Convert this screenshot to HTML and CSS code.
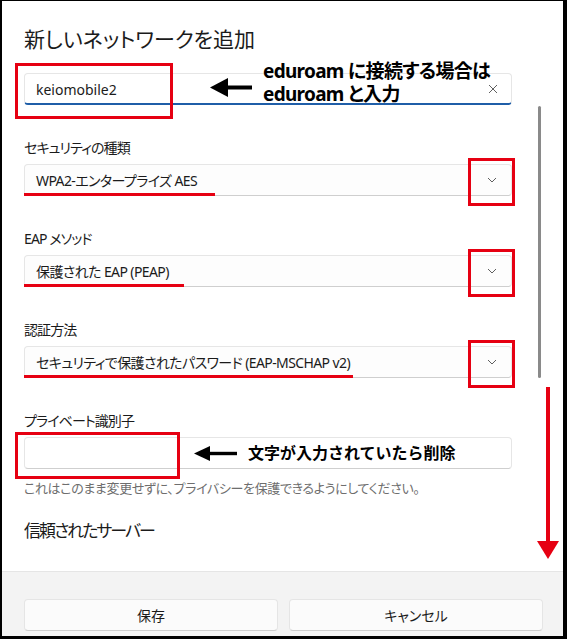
FILE: index.html
```html
<!DOCTYPE html>
<html lang="ja">
<head>
<meta charset="utf-8">
<title>新しいネットワークを追加</title>
<link rel="stylesheet" href="styles.css">
</head>
<body>
<div class="frame">
  <main class="content">
    <h1 class="title">新しいネットワークを追加</h1>

    <div class="field field-ssid">
      <div class="textbox focused">
        <span class="value">keiomobile2</span>
        <svg class="clear" width="10" height="10" viewBox="0 0 10 10"><path d="M1 1L9 9M9 1L1 9" stroke="#606060" stroke-width="1" fill="none"/></svg>
      </div>
      <span class="mark mark-ssid"></span>
      <svg class="arrow arrow-ssid" width="42" height="19" viewBox="0 0 42 19"><polygon points="0,9.5 18,0 18,19" fill="#000"/><rect x="17" y="7.5" width="25" height="4" fill="#000"/></svg>
      <p class="note note-ssid">eduroam に接続する場合は<br>eduroam と入力</p>
    </div>

    <div class="group">
      <div class="label">セキュリティの種類</div>
      <div class="combo">
        <span class="value">WPA2-エンタープライズ AES</span>
        <svg class="chev" width="10" height="6" viewBox="0 0 10 6"><path d="M1 1L5 5L9 1" stroke="#5f5f5f" stroke-width="1" fill="none"/></svg>
        <span class="uline uline-1"></span>
        <span class="mark mark-chev"></span>
      </div>
    </div>

    <div class="group">
      <div class="label">EAP メソッド</div>
      <div class="combo">
        <span class="value">保護された EAP (PEAP)</span>
        <svg class="chev" width="10" height="6" viewBox="0 0 10 6"><path d="M1 1L5 5L9 1" stroke="#5f5f5f" stroke-width="1" fill="none"/></svg>
        <span class="uline uline-2"></span>
        <span class="mark mark-chev"></span>
      </div>
    </div>

    <div class="group">
      <div class="label">認証方法</div>
      <div class="combo">
        <span class="value">セキュリティで保護されたパスワード (EAP-MSCHAP v2)</span>
        <svg class="chev" width="10" height="6" viewBox="0 0 10 6"><path d="M1 1L5 5L9 1" stroke="#5f5f5f" stroke-width="1" fill="none"/></svg>
        <span class="uline uline-3"></span>
        <span class="mark mark-chev"></span>
      </div>
    </div>

    <div class="group">
      <div class="label">プライベート識別子</div>
      <div class="field field-private">
        <div class="textbox"></div>
        <span class="mark mark-private"></span>
        <svg class="arrow arrow-private" width="43" height="15" viewBox="0 0 43 15"><polygon points="0,7.5 16,0 16,15" fill="#000"/><rect x="15" y="5.8" width="28" height="3.4" fill="#000"/></svg>
        <p class="note note-private">文字が入力されていたら削除</p>
      </div>
      <p class="help">これはこのまま変更せずに、プライバシーを保護できるようにしてください。</p>
    </div>

    <h2 class="subhead">信頼されたサーバー</h2>
  </main>

  <footer class="footer">
    <button class="btn">保存</button>
    <button class="btn">キャンセル</button>
  </footer>

  <div class="scrollbar"></div>
  <div class="red-arrow"><span class="shaft"></span><span class="head"></span></div>
</div>
</body>
</html>
```

FILE: styles.css
```css
html, body {
  margin: 0;
  padding: 0;
  background: #fff;
}

body {
  font-family: "Noto Sans", "Noto Sans CJK JP", sans-serif;
  font-feature-settings: "palt";
  color: #1b1b1b;
}

.frame {
  position: relative;
  width: 567px;
  height: 639px;
  box-sizing: border-box;
  border-style: solid;
  border-color: #000;
  border-width: 1px 4px 3px 2px;
  display: flex;
  flex-direction: column;
  overflow: hidden;
  background: #fff;
}

.content {
  flex: 1;
  min-height: 0;
  padding: 24px 51px 0 22px;
  overflow: hidden;
}

.title {
  margin: 0;
  font-size: 21px;
  font-weight: 400;
  line-height: 28px;
}

.field {
  position: relative;
}

.field-ssid {
  margin-top: 20px;
}

.textbox,
.combo {
  position: relative;
  height: 32px;
  box-sizing: border-box;
  border: 1px solid #e6e6e6;
  border-bottom-color: #cfcfcf;
  border-radius: 4px;
  display: flex;
  align-items: center;
  justify-content: space-between;
  padding: 0 13px 0 11px;
  font-size: 14px;
  background: #fdfdfd;
}

.textbox {
  background: #fff;
}

.textbox.focused {
  border-bottom: 2px solid #1f5ea8;
  padding-top: 1px;
}

.combo {
  padding-right: 14px;
  letter-spacing: -0.6px;
}

.value {
  white-space: nowrap;
}

.clear,
.chev {
  display: block;
}

.group {
  margin-top: 33px;
}

.label {
  font-size: 14px;
  line-height: 20px;
  margin-bottom: 6px;
  letter-spacing: -0.9px;
}

.mark {
  position: absolute;
  box-sizing: border-box;
  border: 3px solid #e60012;
  pointer-events: none;
}

.mark-ssid {
  left: -9px;
  top: -10px;
  width: 158px;
  height: 56px;
}

.mark-chev {
  left: 443px;
  top: -7px;
  width: 47px;
  height: 48px;
}

.mark-private {
  left: -9px;
  top: -5px;
  width: 165px;
  height: 47px;
}

.uline {
  position: absolute;
  left: -1px;
  bottom: -1px;
  height: 3px;
  background: #e60012;
}

.uline-1 { width: 191px; }
.uline-2 { width: 160px; }
.uline-3 { width: 329px; }

.arrow {
  position: absolute;
  display: block;
}

.arrow-ssid {
  left: 186px;
  top: 5px;
}

.arrow-private {
  left: 170px;
  top: 9px;
}

.note {
  position: absolute;
  margin: 0;
  font-weight: 700;
  color: #000;
  white-space: nowrap;
}

.note-ssid {
  left: 239px;
  top: -13px;
  font-size: 19px;
  line-height: 23px;
  letter-spacing: -0.7px;
}

.note-private {
  left: 224px;
  top: 5px;
  font-size: 16px;
  line-height: 22px;
  font-feature-settings: normal;
}

.help {
  margin: 10px 0 0;
  font-size: 13px;
  line-height: 18px;
  color: #6e6e6e;
  white-space: nowrap;
  letter-spacing: -0.35px;
}

.subhead {
  margin: 22px 0 0;
  font-size: 17px;
  font-weight: 400;
  line-height: 24px;
  letter-spacing: -2px;
}

.footer {
  flex: none;
  height: 65px;
  box-sizing: border-box;
  border-top: 1px solid #e5e5e5;
  background: #f3f3f3;
  padding: 27px 20px 0 22px;
  display: grid;
  grid-template-columns: 1fr 1fr;
  column-gap: 11px;
  align-items: start;
}

.btn {
  height: 32px;
  border: 1px solid #e5e5e5;
  border-bottom-color: #cccccc;
  border-radius: 4px;
  background: #fbfbfb;
  font-family: inherit;
  font-feature-settings: "palt";
  font-size: 14px;
  color: #1b1b1b;
  padding: 0;
}

.scrollbar {
  position: absolute;
  left: 536px;
  top: 105px;
  width: 3px;
  height: 272px;
  border-radius: 2px;
  background: #8a8a8a;
}

.red-arrow .shaft {
  position: absolute;
  left: 544px;
  top: 386px;
  width: 4px;
  height: 158px;
  background: #e60012;
}

.red-arrow .head {
  position: absolute;
  left: 535px;
  top: 540px;
  width: 0;
  height: 0;
  border-left: 11px solid transparent;
  border-right: 11px solid transparent;
  border-top: 18px solid #e60012;
}
```
